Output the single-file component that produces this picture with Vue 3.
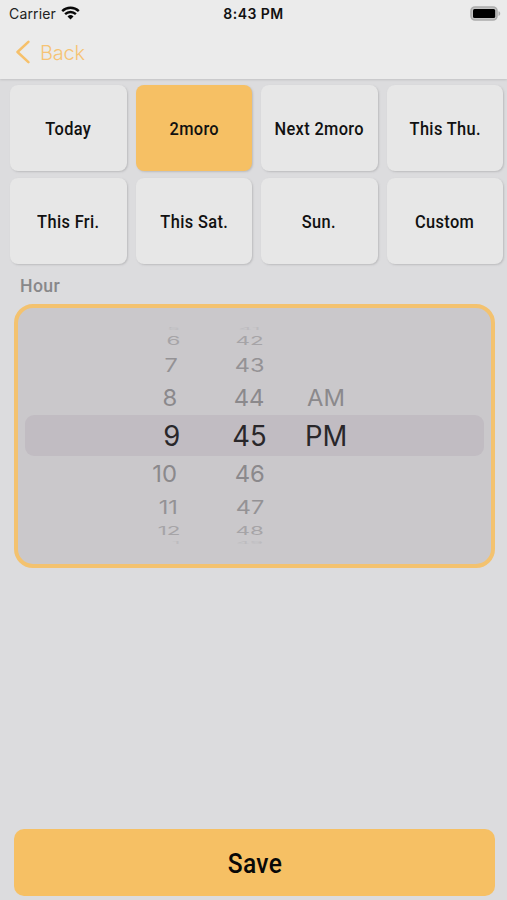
<script setup>
const days = ['Today', '2moro', 'Next 2moro', 'This Thu.', 'This Fri.', 'This Sat.', 'Sun.', 'Custom']
const selectedDay = '2moro'
const rows = [
  { level: 'up4', hour: '5', minute: '41', period: '' },
  { level: 'up3', hour: '6', minute: '42', period: '' },
  { level: 'up2', hour: '7', minute: '43', period: '' },
  { level: 'up1', hour: '8', minute: '44', period: 'AM' },
  { level: 'now', hour: '9', minute: '45', period: 'PM' },
  { level: 'down1', hour: '10', minute: '46', period: '' },
  { level: 'down2', hour: '11', minute: '47', period: '' },
  { level: 'down3', hour: '12', minute: '48', period: '' },
  { level: 'down4', hour: '1', minute: '49', period: '' },
]
</script>

<template>
  <div class="screen">
    <header class="top">
      <div class="status">
        <div class="carrier">
          <span class="carrier-name">Carrier</span>
          <svg class="wifi" viewBox="0 0 19 14" width="19" height="14">
            <path d="M1.2 5.1a12 12 0 0 1 16.6 0M4.1 8.2a7.8 7.8 0 0 1 10.8 0" fill="none" stroke="#080808" stroke-width="2.4" />
            <path d="M6.5 10.4a4.3 4.3 0 0 1 6 0L9.5 13.5z" fill="#080808" />
          </svg>
        </div>
        <span class="clock">8:43 PM</span>
        <svg class="battery" viewBox="0 0 31 15" width="31" height="15">
          <rect x="1" y="1" width="26" height="13" rx="4" fill="#c4c4c4" stroke="#acacac" stroke-width="1.6" />
          <rect x="3" y="3" width="22.2" height="9" rx="1.5" fill="#000" />
          <path d="M28.5 5.2c2.3.7 2.3 4 0 4.7z" fill="#acacac" />
        </svg>
      </div>
      <nav class="nav">
        <svg viewBox="0 0 14 24" width="14" height="24">
          <path d="M12.4 1.8 1.5 12l10.9 10.2" fill="none" stroke="#f6c06a" stroke-width="2.5" stroke-linecap="round" stroke-linejoin="round" />
        </svg>
        <span class="back">Back</span>
      </nav>
    </header>

    <section class="days">
      <button v-for="d in days" :key="d" class="day" :class="{ active: d === selectedDay }">
        <span class="din">{{ d }}</span>
      </button>
    </section>

    <div class="label"><span class="din">Hour</span></div>

    <section class="picker">
      <div v-for="r in rows" :key="r.level" class="row" :class="r.level">
        <span class="cell hour"><span class="glyph">{{ r.hour }}</span></span>
        <span class="cell minute"><span class="glyph">{{ r.minute }}</span></span>
        <span class="cell period"><span class="glyph">{{ r.period }}</span></span>
      </div>
    </section>

    <button class="save"><span class="din">Save</span></button>
  </div>
</template>

<style>
body { background: #dcdcde; overflow: hidden; }
</style>

<style scoped>
.screen {
  width: 507px;
  height: 900px;
  box-sizing: border-box;
  display: flex;
  flex-direction: column;
  background: #dcdcde;
  font-family: Inter, "Liberation Sans", sans-serif;
  color: #111;
  overflow: hidden;
}
button { border: 0; padding: 0; margin: 0; font: inherit; color: inherit; }
.top {
  flex: none;
  height: 79px;
  background: #ebebeb;
  box-shadow: 0 1px 2px #c2c2c4;
}
.status {
  display: grid;
  grid-template-columns: 1fr auto 1fr;
  align-items: center;
  height: 27px;
  padding: 0 6px 0 9px;
}
.carrier { display: flex; align-items: center; gap: 5px; }
.carrier-name { font-size: 14px; letter-spacing: 0.15px; color: #222; }
.wifi { margin-top: -2px; }
.clock { font-size: 14px; font-weight: 600; letter-spacing: 0.45px; margin-right: 3px; }
.battery { justify-self: end; }
.nav { display: flex; align-items: center; gap: 10px; height: 50px; padding-left: 16px; color: #f6c374; }
.back { font-size: 20px; font-weight: 350; letter-spacing: -0.2px; margin-top: 1px; }
.din { display: inline-block; font-family: Roboto, sans-serif; font-weight: 500; letter-spacing: 0.4px; transform: scaleX(0.91); white-space: nowrap; }
.days {
  flex: none;
  display: grid;
  grid-template-columns: repeat(4, 116.5px);
  grid-auto-rows: 86px;
  gap: 7px 9px;
  padding: 6px 0 0 10px;
}
.day {
  display: flex;
  align-items: center;
  justify-content: center;
  border-radius: 8px;
  background: #e7e7e7;
  box-shadow: 1px 1px 2px #bcbcbe;
  font-size: 18px;
}
.day.active { background: #f6c064; }
.label { flex: none; height: 40px; line-height: 44px; padding-left: 18px; font-size: 18px; color: #88888a; }
.label .din { transform-origin: left; margin-left: 1.5px; transform: scaleX(0.98); }
.picker {
  flex: none;
  height: 264px;
  width: 481px;
  margin-left: 14px;
  box-sizing: border-box;
  border: 3.5px solid #f3c26f;
  border-width: 4px;
  border-radius: 19px;
  background: #cac8cb;
  padding: 17px 7px 0;
}
.row { display: grid; grid-template-columns: 155px 139px 1fr; align-items: center; border-radius: 9px; color: #8b898c; font-size: 28px; line-height: 1; }
.cell { display: flex; align-items: center; height: 0; }
.hour { justify-content: flex-end; }
.minute { justify-content: center; }
.glyph { display: block; }
.hour .glyph { transform-origin: right; }
.period .glyph { transform-origin: left; margin-left: -14px; }
.now { height: 41px; background: #c1bcc2; color: #29272a; }
.now .glyph { transform: scaleX(0.98); }
.up1, .down1 { height: 34.5px; }
.up1 .glyph, .down1 .glyph { transform: scale(0.85, 0.83); }
.up1 .period .glyph { margin-left: -12px; }
.up1 .hour, .down1 .hour { padding-right: 3px; }
.down1 .cell { margin-top: 2px; }
.up2, .down2 { height: 31px; color: #949295; }
.up2 .glyph, .down2 .glyph { transform: scale(0.84, 0.66); }
.up2 .hour, .down2 .hour { padding-right: 2px; }
.down2 .cell, .down3 .cell { margin-top: 2px; }
.up3, .down3 { height: 17.5px; color: #a6a4a7; }
.up3 .glyph, .down3 .glyph { transform: scale(0.8, 0.4); }
.up4, .down4 { height: 7px; color: #b8b6b9; overflow: hidden; }
.up4 .glyph, .down4 .glyph { transform: scale(0.76, 0.13); opacity: 0.7; }
.save {
  flex: none;
  width: 481px;
  height: 67px;
  margin: auto 0 4px 14px;
  border-radius: 10px;
  background: #f6c064;
  font-size: 27px;
  color: #080808;
  display: flex;
  align-items: center;
  justify-content: center;
}
.save .din { margin-top: 3px; }
</style>
